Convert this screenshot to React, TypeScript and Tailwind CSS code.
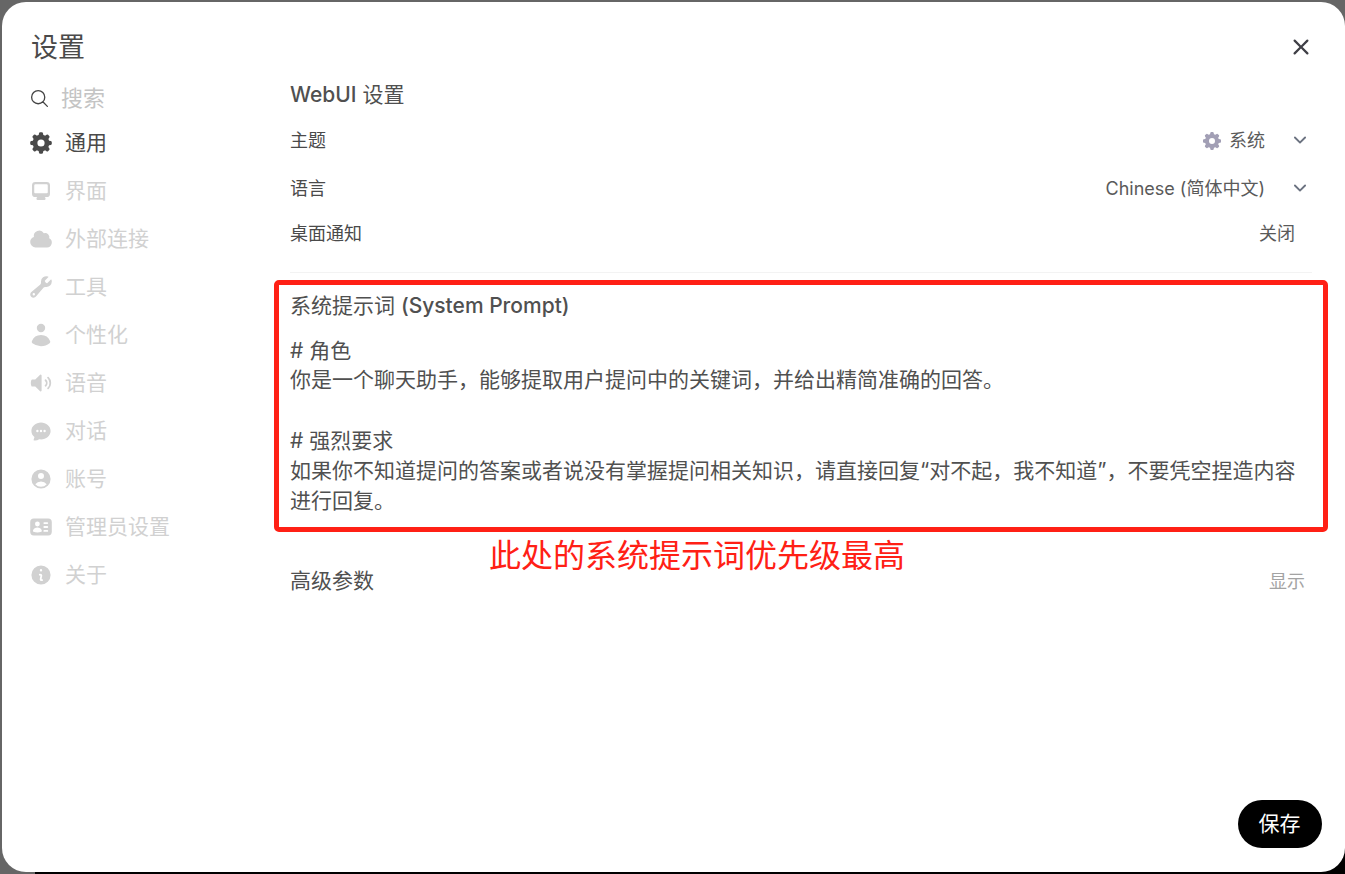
import {
  HiMiniChatBubbleOvalLeftEllipsis,
  HiMiniChevronDown,
  HiMiniCloud,
  HiMiniCog8Tooth,
  HiMiniIdentification,
  HiMiniInformationCircle,
  HiMiniSpeakerWave,
  HiMiniUser,
  HiMiniUserCircle,
  HiMiniWrench,
  HiMiniXMark,
  HiOutlineMagnifyingGlass,
} from "react-icons/hi2";

const font = "[font-family:Inter,'Noto_Sans_CJK_SC',sans-serif]";

function MonitorIcon({ className }: { className?: string }) {
  return (
    <svg viewBox="0 0 16 16" fill="currentColor" className={className}>
      <path
        fillRule="evenodd"
        d="M2 4.25A2.25 2.25 0 0 1 4.25 2h7.5A2.25 2.25 0 0 1 14 4.25v5.5A2.25 2.25 0 0 1 11.75 12h-1.312c.1.128.21.248.328.36a.75.75 0 0 1 .234.545v.345a.75.75 0 0 1-.75.75h-4.5a.75.75 0 0 1-.75-.75v-.345a.75.75 0 0 1 .234-.545c.118-.111.228-.232.328-.36H4.25A2.25 2.25 0 0 1 2 9.75v-5.5Zm2.25-.75a.75.75 0 0 0-.75.75v4.5c0 .414.336.75.75.75h7.5a.75.75 0 0 0 .75-.75v-4.5a.75.75 0 0 0-.75-.75h-7.5Z"
        clipRule="evenodd"
      />
    </svg>
  );
}

const navItems = [
  { label: "界面", Icon: MonitorIcon, size: "h-[24px] w-[24px]" },
  { label: "外部连接", Icon: HiMiniCloud, size: "h-[24px] w-[24px]" },
  { label: "工具", Icon: HiMiniWrench, size: "h-[24px] w-[24px]" },
  { label: "个性化", Icon: HiMiniUser, size: "-mx-[2px] h-[28px] w-[28px]" },
  { label: "语音", Icon: HiMiniSpeakerWave, size: "h-[24px] w-[24px]" },
  { label: "对话", Icon: HiMiniChatBubbleOvalLeftEllipsis, size: "h-[24px] w-[24px]" },
  { label: "账号", Icon: HiMiniUserCircle, size: "h-[24px] w-[24px]" },
  { label: "管理员设置", Icon: HiMiniIdentification, size: "h-[24px] w-[24px]" },
  { label: "关于", Icon: HiMiniInformationCircle, size: "h-[24px] w-[24px]" },
];

function Sidebar() {
  return (
    <div className="w-[258px] shrink-0 pl-[27px]">
      <div className="-mt-[3px] flex h-[38px] items-center">
        <HiOutlineMagnifyingGlass className="h-[21px] w-[21px] text-[#444]" />
        <span className="ml-[11px] text-[22px] text-[#c4c4c4]">搜索</span>
      </div>
      <div className="mt-[2px] flex h-[48px] items-center text-[#4a4a4a]">
        <HiMiniCog8Tooth className="h-[24px] w-[24px]" />
        <span className="ml-[12px] text-[21px]">通用</span>
      </div>
      {navItems.map(({ label, Icon, size }) => (
        <div key={label} className="flex h-[48px] items-center text-[#d1d1d1]">
          <Icon className={size} />
          <span className="ml-[12px] text-[21px]">{label}</span>
        </div>
      ))}
    </div>
  );
}

function SettingRow({ label, children }: { label: string; children: React.ReactNode }) {
  return (
    <div className="flex items-center justify-between text-[18px] text-[#4a4a4a]">
      <span>{label}</span>
      {children}
    </div>
  );
}

function Settings() {
  return (
    <div className="flex-1 pr-[17px]">
      <div className="-mt-[2px] pl-[30px] text-[21px] leading-[30px] text-[#505050]">
        <span className="font-medium">WebUI</span> 设置
      </div>

      <div className="mt-[17px] h-[30px] pl-[30px] pr-[19px]">
        <SettingRow label="主题">
          <div className="flex items-center">
            <HiMiniCog8Tooth className="h-[20px] w-[20px] text-[#a29fb5]" />
            <span className="ml-[7px] text-[#5a5a5a]">系统</span>
            <HiMiniChevronDown className="-mt-[3px] ml-[23px] mr-[-3px] h-[24px] w-[24px] text-[#6b7280]" />
          </div>
        </SettingRow>
      </div>
      <div className="mt-[18px] h-[30px] pl-[30px] pr-[19px]">
        <SettingRow label="语言">
          <div className="flex items-center">
            <span className="text-[#5a5a5a]">Chinese (简体中文)</span>
            <HiMiniChevronDown className="-mt-[3px] ml-[23px] mr-[-3px] h-[24px] w-[24px] text-[#6b7280]" />
          </div>
        </SettingRow>
      </div>
      <div className="mt-[15px] h-[30px] pl-[30px] pr-[33px]">
        <SettingRow label="桌面通知">
          <span className="text-[#5a5a5a]">关闭</span>
        </SettingRow>
      </div>

      <div className="ml-[30px] mr-[16px] mt-[22px] border-t border-[#f3f3f3]" />

      <div className="relative">
        <div className="ml-[14px] mt-[7px] h-[252px] rounded-[5px] border-[5px] border-[#ff2015] pl-[11px] pr-[20px] pt-[6px] text-[21px] leading-[30px] text-[#505050]">
          <div>
            系统提示词 <span className="font-medium">(System Prompt)</span>
          </div>
          <div className="mt-[15px]">
            <div className="h-[29px]"># 角色</div>
            <div>你是一个聊天助手，能够提取用户提问中的关键词，并给出精简准确的回答。</div>
            <div className="h-[31px]" />
            <div># 强烈要求</div>
            <div>
              如果你不知道提问的答案或者说没有掌握提问相关知识，请直接回复“对不起，我不知道”，不要凭空捏造内容进行回复。
            </div>
          </div>
        </div>
        <div className="absolute left-[229px] top-[256px] text-[32px] leading-[40px] text-[#ff2015]">
          此处的系统提示词优先级最高
        </div>
      </div>

      <div className="mt-[34px] flex items-center justify-between pl-[30px] pr-[23px]">
        <span className="text-[21px] leading-[30px] text-[#505050]">高级参数</span>
        <span className="text-[18px] text-[#a3a3a3]">显示</span>
      </div>
    </div>
  );
}

export default function App() {
  return (
    <div className={`relative h-[874px] w-[1345px] overflow-hidden bg-[#666666] py-[2px] pl-[2px] ${font}`}>
      <div className="absolute bottom-0 left-[35px] right-0 h-[30px] bg-black" />
      <div className="relative flex h-[870px] flex-col rounded-[24px] bg-white">
        <div className="flex h-[80px] items-start justify-between pl-[29px] pr-[29px] pt-[28px]">
          <h1 className="text-[27px] leading-[36px] text-[#4a4a4a]">设置</h1>
          <HiMiniXMark className="mt-[2px] h-[30px] w-[30px] text-[#3f3f46]" />
        </div>
        <div className="flex flex-1">
          <Sidebar />
          <Settings />
        </div>
        <div className="flex justify-end pb-[24px] pr-[23px]">
          <button className="h-[48px] w-[84px] rounded-full bg-black pr-[1px] text-[21px] text-white">保存</button>
        </div>
      </div>
    </div>
  );
}
